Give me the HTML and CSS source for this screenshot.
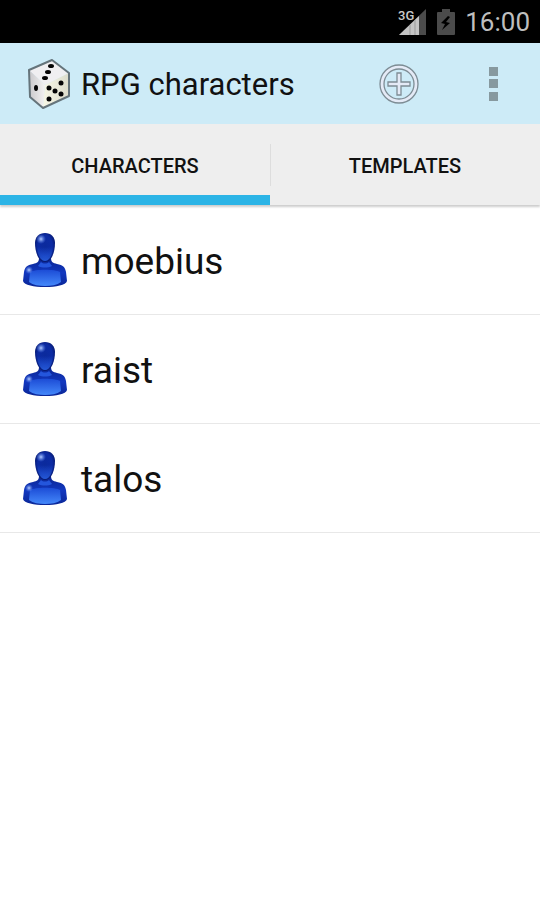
FILE: index.html
```
<!DOCTYPE html>
<html lang="en">
<head>
    <meta charset="UTF-8">
    <meta name="viewport" content="width=device-width, initial-scale=1.0">
    <title>RPG characters</title>
    <link rel="stylesheet" href="styles.css">
</head>
<body>
    <!-- Shared gradients and the person icon -->
    <svg class="defs" width="0" height="0" aria-hidden="true">
        <defs>
            <radialGradient id="head-fill" cx="0.5" cy="0.45" r="0.6">
                <stop offset="0" stop-color="#0b2a9c"/>
                <stop offset="0.6" stop-color="#0c2ba4"/>
                <stop offset="1" stop-color="#05145f"/>
            </radialGradient>
            <linearGradient id="head-glow" x1="0" y1="0" x2="0" y2="1">
                <stop offset="0.3" stop-color="#2860e4" stop-opacity="0"/>
                <stop offset="1" stop-color="#2860e4" stop-opacity="0.9"/>
            </linearGradient>
            <linearGradient id="body-fill" x1="0" y1="0" x2="0" y2="1">
                <stop offset="0" stop-color="#0a2490"/>
                <stop offset="0.5" stop-color="#1238c0"/>
                <stop offset="1" stop-color="#0a2696"/>
            </linearGradient>
            <linearGradient id="body-glow" x1="0" y1="0" x2="0" y2="1">
                <stop offset="0" stop-color="#1c4cd6"/>
                <stop offset="1" stop-color="#4488fa"/>
            </linearGradient>
            <radialGradient id="shine">
                <stop offset="0" stop-color="#b4ccff"/>
                <stop offset="1" stop-color="#5a86f0" stop-opacity="0"/>
            </radialGradient>
            <symbol id="person" viewBox="0 0 44 54">
                <path fill="url(#body-fill)" d="M16 25h12c0 4 2 5 6 6 6 1 8 3 9 8l1 9c-1 4-11 6-22 6S1 52 0 48l1-9c1-5 3-7 9-8 4-1 6-2 6-6z"/>
                <path fill="url(#body-glow)" d="M7 39c5-3 25-3 30 0l1 10c-4 3-10 4-16 4S10 52 6 49z"/>
                <path fill="#2456dc" d="M18 29c2 2 6 2 8 0l3 4c-4 2-10 2-14 0z"/>
                <ellipse cx="6" cy="37" rx="4" ry="4" fill="url(#shine)"/>
                <path fill="url(#head-fill)" d="M22 0c6 0 10 4 10 10 0 8-3 19-10 19S12 18 12 10C12 4 16 0 22 0z"/>
                <path fill="url(#head-glow)" d="M22 8c5 0 8 2 8 5 0 7-3 15-8 15s-8-8-8-15c0-3 3-5 8-5z"/>
                <ellipse cx="18" cy="6" rx="5" ry="5" fill="url(#shine)"/>
            </symbol>
        </defs>
    </svg>

    <div class="status-bar">
        <svg class="signal" viewBox="0 0 30 28" aria-hidden="true">
            <path fill="#4b4b4b" d="M29 1v26H2z"/>
            <path fill="#c4c4c4" d="M22 8v19H2z"/>
            <path stroke="#999" d="M13 17v10M18 12v15"/>
            <text x="1" y="12">3G</text>
        </svg>
        <svg class="battery" viewBox="0 0 18 26" aria-hidden="true">
            <path fill="#4b4b4b" d="M5 0h8v3h4q1 0 1 1v21q0 1-1 1H1q-1 0-1-1V4q0-1 1-1h4z"/>
            <path fill="#000" d="M11 7l-7 7 4 1-3 6 8-7-4-1 4-5z"/>
        </svg>
        <span class="clock">16:00</span>
    </div>

    <header class="action-bar">
        <svg class="dice" viewBox="0 0 44 50" aria-hidden="true">
            <linearGradient id="dice-left" x1="0" y1="0" x2="1" y2="0">
                <stop offset="0" stop-color="#c9c8cb"/>
                <stop offset="1" stop-color="#f3f2f2"/>
            </linearGradient>
            <linearGradient id="dice-right" x1="0" y1="0" x2="1" y2="0">
                <stop offset="0" stop-color="#f7f7e6"/>
                <stop offset="1" stop-color="#dcdccb"/>
            </linearGradient>
            <path fill="#f0eff1" d="M2 11L25 1l17 13-24 12z"/>
            <path fill="url(#dice-left)" d="M2 11l16 15-2 23L3 38z"/>
            <path fill="url(#dice-right)" d="M18 26l24-12v23L16 49z"/>
            <path fill="none" stroke="#65747b" stroke-width="2" stroke-linejoin="round" d="M2 11L25 1l17 13v23L16 49 3 38z"/>
            <g fill="#050505">
                <ellipse cx="24" cy="7" rx="3" ry="2"/>
                <ellipse cx="21" cy="13" rx="3" ry="2"/>
                <ellipse cx="18" cy="19" rx="3" ry="2"/>
                <ellipse cx="9" cy="29" rx="2" ry="3"/>
                <ellipse cx="22" cy="29" rx="2.500" ry="2.500"/>
                <ellipse cx="34" cy="24" rx="2.500" ry="2.500"/>
                <ellipse cx="28" cy="32" rx="2.500" ry="2.500"/>
                <ellipse cx="22" cy="40" rx="2.500" ry="2.500"/>
                <ellipse cx="34" cy="35" rx="2.500" ry="2.500"/>
            </g>
        </svg>
        <h1>RPG characters</h1>
        <button class="action" type="button" aria-label="Add character">
            <svg class="add" viewBox="0 0 40 40" aria-hidden="true">
                <circle cx="20" cy="20" r="17" fill="none" stroke="#e4eaf6" stroke-width="4"/>
                <g fill="none" stroke="#7d8c94" stroke-width="1.300">
                    <circle cx="20" cy="20" r="19"/>
                    <circle cx="20" cy="20" r="15"/>
                    <path fill="#e4eaf6" d="M18 9h4v9h9v4h-9v9h-4v-9H9v-4h9z"/>
                </g>
            </svg>
        </button>
        <button class="action" type="button" aria-label="More options">
            <svg class="more" viewBox="0 0 9 34" aria-hidden="true">
                <path fill="#87999f" d="M0 0h9v9H0zM0 12h9v9H0zM0 25h9v9H0z"/>
            </svg>
        </button>
    </header>

    <nav class="tabs">
        <a class="tab active" href="#characters">CHARACTERS</a>
        <a class="tab" href="#templates">TEMPLATES</a>
    </nav>

    <main>
        <ul class="character-list" id="characters">
            <li><a href="#moebius"><svg class="person" aria-hidden="true"><use href="#person"/></svg><span class="name">moebius</span></a></li>
            <li><a href="#raist"><svg class="person" aria-hidden="true"><use href="#person"/></svg><span class="name">raist</span></a></li>
            <li><a href="#talos"><svg class="person" aria-hidden="true"><use href="#person"/></svg><span class="name">talos</span></a></li>
        </ul>
    </main>
</body>
</html>
```
FILE: styles.css
```
* {
    margin: 0;
    padding: 0;
    box-sizing: border-box;
}

body {
    background: #fff;
    color: #111;
    font-family: Roboto, 'Liberation Sans', sans-serif;
}

a {
    color: inherit;
    text-decoration: none;
}

svg {
    display: block;
    flex: none;
}

.defs {
    position: absolute;
}

/* Status bar */
.status-bar {
    display: flex;
    align-items: center;
    justify-content: flex-end;
    height: 43px;
    padding-right: 10px;
    background: #000;
    color: #bebebe;
}

.signal {
    width: 30px;
    height: 28px;
    margin-right: 10px;
}

.signal text {
    fill: #c8c8c8;
    stroke: #000;
    stroke-width: 2px;
    paint-order: stroke;
    font-size: 13px;
    font-weight: 500;
}

.battery {
    width: 18px;
    height: 26px;
    margin-right: 10px;
}

.clock {
    font-size: 26px;
    line-height: 32px;
}

/* Action bar */
.action-bar {
    display: flex;
    align-items: center;
    height: 81px;
    padding-left: 27px;
    background: #cdebf7;
}

.dice {
    width: 44px;
    height: 50px;
    margin-right: 10px;
}

.action-bar h1 {
    flex: 1;
    padding-top: 2px;
    font-size: 31px;
    font-weight: 400;
    line-height: 36px;
}

.action {
    display: flex;
    align-items: center;
    justify-content: center;
    width: 94px;
    height: 100%;
    border: none;
    background: none;
    cursor: pointer;
}

.add {
    width: 40px;
    height: 40px;
}

.more {
    width: 9px;
    height: 34px;
}

/* Tabs */
.tabs {
    display: flex;
    height: 81px;
    background: #eee;
    box-shadow: 0 2px 2px rgba(0, 0, 0, 0.2);
}

.tab {
    flex: 1;
    display: flex;
    align-items: center;
    justify-content: center;
    border-bottom: 10px solid transparent;
    padding-top: 12px;
    font-size: 20px;
    font-weight: 500;
}

.tab.active {
    border-bottom-color: #2cb4e6;
}

.tab + .tab {
    background: linear-gradient(#ddd, #ddd) left 20px / 1px 42px no-repeat;
}

/* Character list */
.character-list {
    padding-top: 1px;
    list-style: none;
}

.character-list a {
    display: flex;
    align-items: center;
    height: 109px;
    padding: 0 23px;
    border-bottom: 1px solid #e8e8e8;
    font-size: 37px;
    line-height: 44px;
}

.person {
    width: 44px;
    height: 54px;
    margin-right: 14px;
}

.name {
    padding-top: 3px;
}
```
